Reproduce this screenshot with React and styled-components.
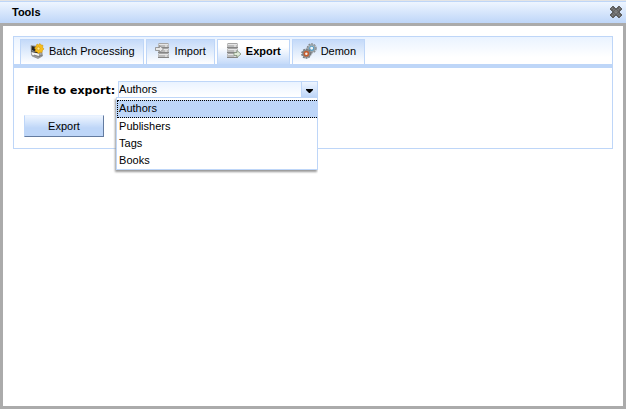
import React, { useState } from "react";
import styled, { createGlobalStyle } from "styled-components";

const GlobalStyle = createGlobalStyle`
  *, *::before, *::after { box-sizing: border-box; }
  body {
    margin: 0;
    background: #ababab;
    color: #000;
    font-family: "Liberation Sans", Arial, sans-serif;
    font-size: 11px;
  }
  button, input { font: inherit; color: inherit; }
`;

const Window = styled.main`
  display: flex;
  flex-direction: column;
  min-height: 100vh;
`;

const TopEdge = styled.div`
  height: 1px;
  background: #e4e4e4;
`;

const TitleBar = styled.header`
  display: flex;
  align-items: center;
  justify-content: space-between;
  height: 22px;
  padding: 0 3px 1px 12px;
  border-top: 1px solid #bed6f8;
  background: linear-gradient(#eef5ff, #bed6f8);
`;

const Title = styled.h1`
  margin: 0;
  font-size: 11px;
  line-height: 14px;
`;

const CloseButton = styled.button`
  display: flex;
  padding: 0;
  border: 0;
  background: none;
`;

const Content = styled.div`
  flex: 1;
  margin: 3px;
  padding: 10px;
  background: #fff;
`;

const TabPanel = styled.section`
  border: 1px solid #bed6f8;
`;

const TabBar = styled.div`
  display: flex;
  gap: 2px;
  height: 31px;
  padding: 2px 6px 0;
  border-bottom: 4px solid #bed6f8;
  background: linear-gradient(#eaf3ff, #fff 75%);
`;

const Tab = styled.button`
  display: flex;
  align-items: center;
  gap: 4px;
  padding: 0 8px 2px;
  border: 1px solid #bed6f8;
  border-bottom: 0;
  background: ${(p) => (p.$active
    ? "linear-gradient(#fff, #fff 30%, #c4daf9)"
    : "linear-gradient(#c4daf9, #fff)")};
  font-weight: ${(p) => (p.$active ? "bold" : "normal")};
  white-space: nowrap;

  svg { flex: none; }
`;

const Form = styled.form`
  display: flex;
  flex-direction: column;
  align-items: flex-start;
  gap: 17px;
  padding: 13px 10px 11px;
`;

const Field = styled.div`
  display: flex;
  gap: 3px;
  padding-left: 3px;
`;

const Label = styled.label`
  height: 17px;
  padding-top: 3px;
  font: bold 11px/14px "DejaVu Sans", Verdana, sans-serif;
  white-space: nowrap;
`;

const Combo = styled.div`
  position: relative;
  display: flex;
  width: 200px;
  height: 17px;
  border: 1px solid #bed6f8;
  background: linear-gradient(#eaf3ff, #fff);
`;

const ComboInput = styled.input`
  flex: 1;
  min-width: 0;
  padding: 0 0 1px;
  border: 0;
  outline: 0;
  background: none;
`;

const ComboButton = styled.button`
  display: flex;
  align-items: center;
  justify-content: center;
  width: 16px;
  padding: 2px 0 0;
  border: 0;
  border-left: 1px solid #bed6f8;
  background: linear-gradient(#eef5ff, #bed6f8);
`;

const Options = styled.div`
  position: absolute;
  top: 100%;
  left: -3px;
  right: -1px;
  padding: 2px 0 0;
  border: 1px solid #bed6f8;
  background: #fff;
  box-shadow: -1px 2px 2px #999;
  clip-path: inset(0 0 -5px -5px);
`;

const Option = styled.div`
  height: ${(p) => (p.$active ? 18 : 17)}px;
  padding: 0 1px;
  border: 1px ${(p) => (p.$active ? "dotted #000" : "solid transparent")};
  border-right: 0;
  background: ${(p) => (p.$active ? "#bed6f8" : "transparent")};
  line-height: 15px;
`;

const ExportButton = styled.button`
  width: 80px;
  height: 22px;
  padding: 0 0 1px;
  border: 1px solid;
  border-color: #e7f1ff #637ba0 #637ba0 #bed6f8;
  background: linear-gradient(#eef5ff, #bed6f8 60%);
`;

function BatchIcon() {
  return (
    <svg width="16" height="16" viewBox="0 0 16 16" aria-hidden="true">
      <path d="M4 4h8l1.5 9-4.5 2.5-6-2.5z" fill="#a5a5a5" stroke="#777" strokeWidth=".6" />
      <path d="M2 2.5l8 1 .5 10.5-8-2z" fill="#f4f4f4" stroke="#888" strokeWidth=".7" />
      <path d="M2.5 3l7 1v6.500l-7-1.500z" fill="#252525" />
      <path d="M3 7l4 2-4-.5z" fill="#9aa2aa" />
      <path d="M8 1l1.500.8L11 .5l1 1.500 2 .3-.4 2L15 6l-1.500 1.200L13 9.500l-2-.3L9.500 10.500 8.200 9 6 8.500l.6-2L5.500 5 7 3.500z" fill="#f8bd1b" stroke="#c98f08" strokeWidth=".5" />
      <circle cx="9.500" cy="5.500" r="1.500" fill="#ffe78a" stroke="#c99412" strokeWidth=".6" />
      <path d="M5 12l5 1.500 3-1.500" fill="none" stroke="#666" strokeWidth=".7" />
    </svg>
  );
}

function TransferIcon({ outgoing }) {
  const arrow = outgoing ? "M8 9.500h3V7.500l4 3.500-4 3.500v-2H8z" : "M.5 4.500h4V2.500L8.500 6l-4 3.500v-2h-4z";
  return (
    <svg width="16" height="16" viewBox="0 0 16 16" aria-hidden="true">
      <g transform={outgoing ? "translate(-2 0)" : undefined}>
        {[0, 5, 10].map((y) => (
          <g key={y} transform={`translate(0 ${y})`}>
            <path d="M3 1h11v4H3z" fill="#bcbcbc" />
            <path d="M4 0h9l1 1H3z" fill="#a5a5a5" />
            <path d="M4 1.500h9" stroke="#e6e6e6" />
            <path d="M3 4.500h11" stroke="#858585" />
            <path d="M10 3h2" stroke="#f5f5f5" />
          </g>
        ))}
      </g>
      <path d={arrow} fill={outgoing ? "#dfead8" : "#e8e8e8"} stroke={outgoing ? "#82917b" : "#878787"} strokeWidth=".8" />
    </svg>
  );
}

function GearsIcon() {
  return (
    <svg width="16" height="16" viewBox="0 0 18 18" aria-hidden="true">
      <circle cx="12" cy="6" r="4.700" fill="none" stroke="#85898c" strokeWidth="2" strokeDasharray="2 1" />
      <circle cx="12" cy="6" r="3.700" fill="#e9eff2" stroke="#9ba3a7" strokeWidth="1.800" />
      <circle cx="12" cy="6" r="2.300" fill="#f2f7fa" stroke="#579cc2" strokeWidth="1.300" />
      <circle cx="6" cy="12" r="4.700" fill="none" stroke="#74787b" strokeWidth="2.200" strokeDasharray="2 1" />
      <circle cx="6" cy="12" r="3.700" fill="#d3d3d3" stroke="#85898b" strokeWidth="1.800" />
      <circle cx="6" cy="12" r="2.300" fill="#eee" stroke="#c45d2f" strokeWidth="1.800" />
    </svg>
  );
}

function CloseIcon() {
  return (
    <svg width="14" height="14" viewBox="0 0 14 14" aria-hidden="true">
      <path d="M3 1h2v1h1v1h2V2h1V1h2v1h1v1h1v2h-1v1h-1v2h1v1h1v2h-1v1h-1v1H9v-1H8v-1H6v1H5v1H3v-1H2v-1H1V9h1V8h1V6H2V5H1V3h1V2h1z" fill="#5f5f5f" />
      <path d="M3 3l8 8m0-8-8 8" stroke="#858585" strokeWidth="2" strokeDasharray="1 1" />
    </svg>
  );
}

const tabs = [
  { name: "Batch Processing", icon: <BatchIcon /> },
  { name: "Import", icon: <TransferIcon /> },
  { name: "Export", icon: <TransferIcon outgoing /> },
  { name: "Demon", icon: <GearsIcon /> },
];
const files = ["Authors", "Publishers", "Tags", "Books"];

export default function App() {
  const [tab, setTab] = useState("Export");
  const [file, setFile] = useState("Authors");
  const [open, setOpen] = useState(true);

  return (
    <>
      <GlobalStyle />
      <Window>
        <TopEdge />
        <TitleBar>
          <Title>Tools</Title>
          <CloseButton type="button" aria-label="Close"><CloseIcon /></CloseButton>
        </TitleBar>
        <Content>
          <TabPanel>
            <TabBar role="tablist">
              {tabs.map(({ name, icon }) => (
                <Tab
                  key={name}
                  type="button"
                  role="tab"
                  aria-selected={tab === name}
                  $active={tab === name}
                  onClick={() => setTab(name)}
                >
                  {icon}
                  {name}
                </Tab>
              ))}
            </TabBar>
            <Form onSubmit={(e) => e.preventDefault()}>
              <Field>
                <Label htmlFor="file">File to export:</Label>
                <Combo>
                  <ComboInput
                    id="file"
                    role="combobox"
                    aria-expanded={open}
                    aria-controls="files"
                    readOnly
                    value={file}
                  />
                  <ComboButton type="button" aria-label="Show files" onClick={() => setOpen(!open)}>
                    <svg width="7" height="4" viewBox="0 0 7 4" aria-hidden="true">
                      <path d="M0 0h7v1L4 4H3L0 1z" fill="#000" />
                    </svg>
                  </ComboButton>
                  {open && (
                    <Options id="files" role="listbox" aria-label="File to export">
                      {files.map((name) => (
                        <Option
                          key={name}
                          role="option"
                          aria-selected={file === name}
                          $active={file === name}
                          onClick={() => { setFile(name); setOpen(false); }}
                        >
                          {name}
                        </Option>
                      ))}
                    </Options>
                  )}
                </Combo>
              </Field>
              <ExportButton type="submit">Export</ExportButton>
            </Form>
          </TabPanel>
        </Content>
      </Window>
    </>
  );
}
